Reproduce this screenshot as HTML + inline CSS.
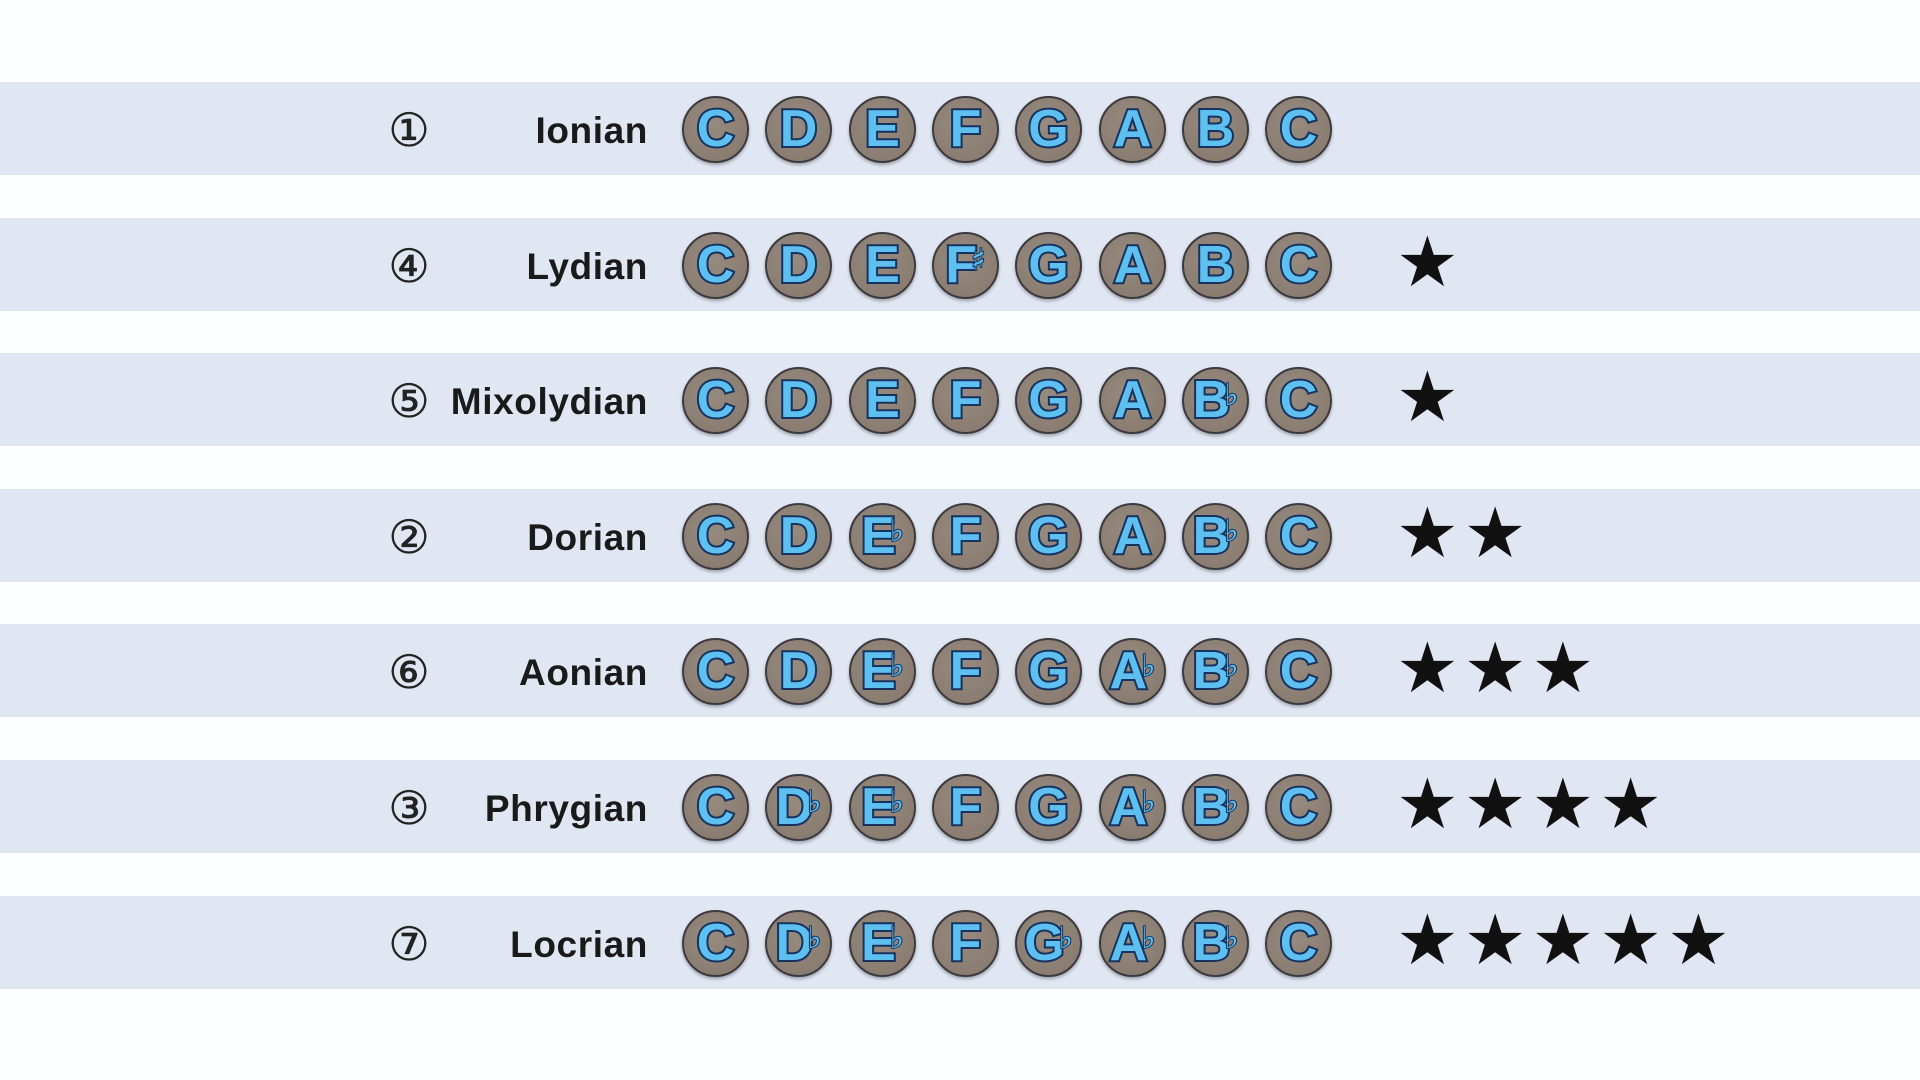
<!DOCTYPE html>
<html><head><meta charset="utf-8"><style>
html,body{margin:0;padding:0;width:1920px;height:1080px;overflow:hidden;background:#fcfdfe;font-family:"Liberation Sans","DejaVu Sans",sans-serif}
.band{position:absolute;left:0;width:1920px;height:93px;background:#e0e7f3}
.num{position:absolute;left:378px;width:62px;height:93px;line-height:97px;text-align:center;font-family:"DejaVu Sans",sans-serif;font-size:46px;color:#222;-webkit-text-stroke:0.4px #222}
.lab{position:absolute;right:1272px;height:93px;line-height:97px;font-size:37px;font-weight:bold;color:#1a1a1a;white-space:nowrap;letter-spacing:0.6px}
.c{position:absolute;width:63px;height:63px;border-radius:50%;background:radial-gradient(circle at 45% 40%,#978a7f,#85776b);border:2px solid #3c3a3e;box-shadow:0 2px 3px rgba(0,0,0,.3)}
.c span{position:absolute;left:0;right:0;top:0;text-align:center;line-height:63px;font-size:52px;font-weight:bold;color:#5ec0f0;-webkit-text-stroke:4px #16325e;paint-order:stroke fill}
.c span i{font-style:normal;font-size:30px;position:relative;top:-12px;margin-left:-6px;-webkit-text-stroke:2px #16325e;font-family:"DejaVu Sans",sans-serif}
.stars{position:absolute;left:1396px;height:93px;line-height:93px;font-family:"DejaVu Sans",sans-serif;font-size:70px;color:#111;letter-spacing:5px}
</style></head><body>
<div id="root"></div>
<script>
const rows=[
["①","Ionian",["C","D","E","F","G","A","B","C"],0],
["④","Lydian",["C","D","E","F#","G","A","B","C"],1],
["⑤","Mixolydian",["C","D","E","F","G","A","Bb","C"],1],
["②","Dorian",["C","D","Eb","F","G","A","Bb","C"],2],
["⑥","Aonian",["C","D","Eb","F","G","Ab","Bb","C"],3],
["③","Phrygian",["C","Db","Eb","F","G","Ab","Bb","C"],4],
["⑦","Locrian",["C","Db","Eb","F","Gb","Ab","Bb","C"],5]];
let h="";
rows.forEach((r,i)=>{
 const top=Math.round(82+i*135.6);
 h+=`<div class="band" style="top:${top}px"></div>`;
 h+=`<div class="num" style="top:${top}px">${r[0]}</div>`;
 h+=`<div class="lab" style="top:${top}px">${r[1]}</div>`;
 r[2].forEach((n,j)=>{
  const cx=715+j*83.3;
  let t=n[0]; if(n.length>1) t+=`<i>${n[1]=="#"?"♯":"♭"}</i>`;
  h+=`<div class="c" style="left:${Math.round(cx-33)}px;top:${top+14}px"><span>${t}</span></div>`;
 });
 if(r[3]) h+=`<div class="stars" style="top:${top-2}px">${"★".repeat(r[3])}</div>`;
});
document.getElementById("root").innerHTML=h;
</script>
</body></html>
